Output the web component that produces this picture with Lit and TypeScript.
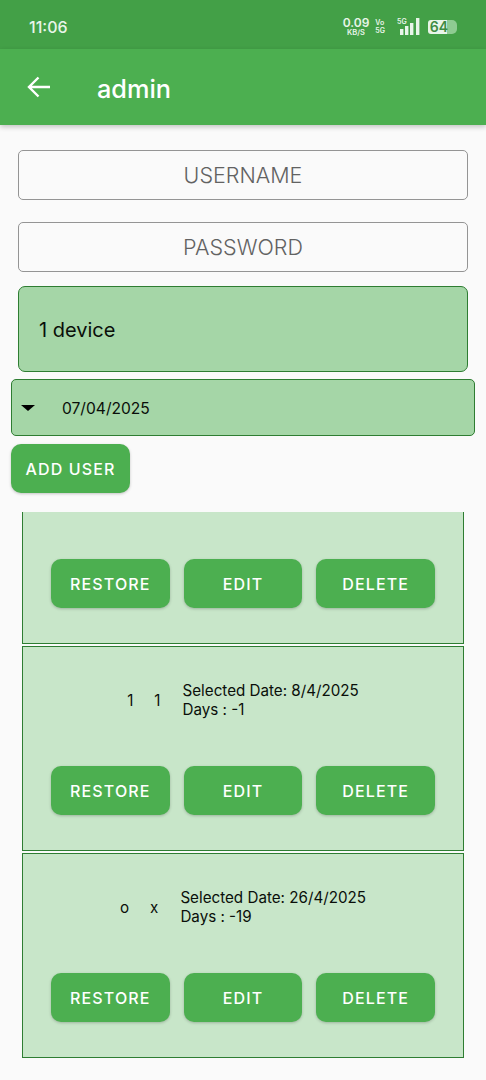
import { LitElement, html, css, svg } from "lit";
import { customElement } from "lit/decorators.js";

const cards = [
  { a: "", b: "", date: "", days: "" },
  { a: "1", b: "1", date: "Selected Date: 8/4/2025", days: "Days : -1" },
  { a: "o", b: "x", date: "Selected Date: 26/4/2025", days: "Days : -19" },
];

@customElement("app-root")
export class AppRoot extends LitElement {
  static styles = css`
    :host { display: block; width: 486px; height: 1080px; background: #fafafa; font-family: Inter, "Noto Sans", sans-serif; overflow: hidden; color: #0a0f0a; }
    .status { height: 49px; background: #43a047; display: flex; align-items: center; justify-content: space-between; padding: 5px 29px 0 29px; box-sizing: border-box; color: #e8f5e9; }
    .time { font-size: 16px; font-weight: 500; }
    .sys { display: flex; align-items: center; gap: 6px; }
    .speed { display: flex; flex-direction: column; align-items: center; font-weight: 600; font-size: 12px; line-height: 10px; }
    .speed small { font-size: 7.5px; line-height: 7px; margin-top: 1px; }
    .vo { display: flex; flex-direction: column; font-size: 7px; line-height: 8px; font-weight: 600; margin-right: 6px; }
    .net { position: relative; width: 24px; height: 18px; margin-right: 1px; }
    .net span { position: absolute; left: 0; top: -1px; font-size: 7px; font-weight: 600; }
    .batt { width: 29px; height: 14px; display: flex; position: relative; }
    .batt b { position: absolute; right: 9px; top: 0; color: #3d8b42; font-size: 14px; font-weight: 600; line-height: 14px; }
    .batt .fill { width: 19px; background: #e8f5e9; border-radius: 3px 0 0 3px; }
    .batt i { width: 10px; background: #8fcb92; border-radius: 0 5px 5px 0; }
    .bar { height: 76px; background: #4caf50; display: flex; align-items: center; padding-left: 26px; gap: 47px; box-shadow: 0 2px 5px rgba(0,0,0,.22); position: relative; color: #fff; font-size: 25.3px; font-weight: 500; box-sizing: border-box; }
    .bar svg { display: block; }
    .bar span { padding-top: 2px; }
    .form { display: flex; flex-direction: column; padding: 25px 11px 0; }
    .input { margin: 0 7px 21.5px; height: 50px; box-sizing: border-box; border: 1px solid #949494; border-bottom-width: 1.5px; border-radius: 5px; display: flex; align-items: center; justify-content: center; color: #626262; font-size: 21.5px; font-weight: 300; }
    .input + .input { margin-bottom: 14.5px; border-bottom-width: 1px; }
    .spinner { margin: 0 7px 7px; height: 86px; box-sizing: border-box; background: #a5d6a7; border: 1px solid #2e7d32; border-radius: 7px; display: flex; align-items: center; padding: 2px 0 0 20px; font-size: 20px; }
    .date { height: 57px; box-sizing: border-box; background: #a5d6a7; border: 1px solid #2e7d32; border-radius: 5px; display: flex; align-items: center; padding: 1px 0 0 9px; gap: 27px; font-size: 15.6px; margin-bottom: 8px; }
    .caret { width: 0; height: 0; border-left: 7px solid transparent; border-right: 7px solid transparent; border-top: 6px solid #000; }
    .btn { background: #4caf50; color: #fff; border-radius: 10px; height: 49px; display: flex; align-items: center; justify-content: center; font-size: 16px; font-weight: 500; letter-spacing: 1.15px; box-shadow: 0 1px 3px rgba(0,0,0,.22); }
    .add { width: 119px; }
    .list { margin: 19px 22px 0; height: 546px; display: flex; flex-direction: column; justify-content: flex-end; gap: 2px; overflow: hidden; }
    .card { flex: none; height: 205px; box-sizing: border-box; background: #c8e6c9; border: 1px solid #2e7d32; display: flex; flex-direction: column; }
    .info { flex: none; height: 119px; display: flex; align-items: center; justify-content: center; font-size: 15.2px; line-height: 19px; padding: 0 1px 13px 0; box-sizing: border-box; }
    .names { display: flex; gap: 21px; margin-right: 22px; padding-left: 1px; }
    .actions { display: flex; justify-content: center; gap: 14px; }
    .actions .btn { width: 118.7px; }
  `;

  render() {
    return html`
      <div class="status">
        <span class="time">11:06</span>
        <div class="sys">
          <div class="speed">0.09<small>KB/S</small></div>
          <div class="vo"><span>Vo</span><span>5G</span></div>
          <div class="net"><span>5G</span>
            <svg width="24" height="18" viewBox="0 0 24 18" fill="#e8f5e9">
              ${svg`<rect x="3" y="11" width="3.4" height="6"/><rect x="8" y="8" width="3.4" height="9"/><rect x="13" y="5" width="3.4" height="12"/><rect x="19" y="0" width="3.4" height="17"/>`}
            </svg>
          </div>
          <div class="batt"><span class="fill"></span><i></i><b>64</b></div>
        </div>
      </div>
      <div class="bar">
        <svg width="24" height="24" viewBox="0 0 24 24" fill="none" stroke="#fff" stroke-width="2.4"><path d="M24 12H3M12.5 2.5 3 12l9.5 9.5"/></svg>
        <span>admin</span>
      </div>
      <div class="form">
        <div class="input">USERNAME</div>
        <div class="input">PASSWORD</div>
        <div class="spinner">1 device</div>
        <div class="date"><span class="caret"></span><span>07/04/2025</span></div>
        <div class="btn add">ADD USER</div>
      </div>
      <div class="list">
        ${cards.map((c) => html`
          <div class="card">
            <div class="info">
              ${c.date ? html`<div class="names"><span>${c.a}</span><span>${c.b}</span></div>
              <div>${c.date}<br />${c.days}</div>` : ""}
            </div>
            <div class="actions">
              <div class="btn">RESTORE</div><div class="btn">EDIT</div><div class="btn">DELETE</div>
            </div>
          </div>`)}
      </div>
    `;
  }
}
